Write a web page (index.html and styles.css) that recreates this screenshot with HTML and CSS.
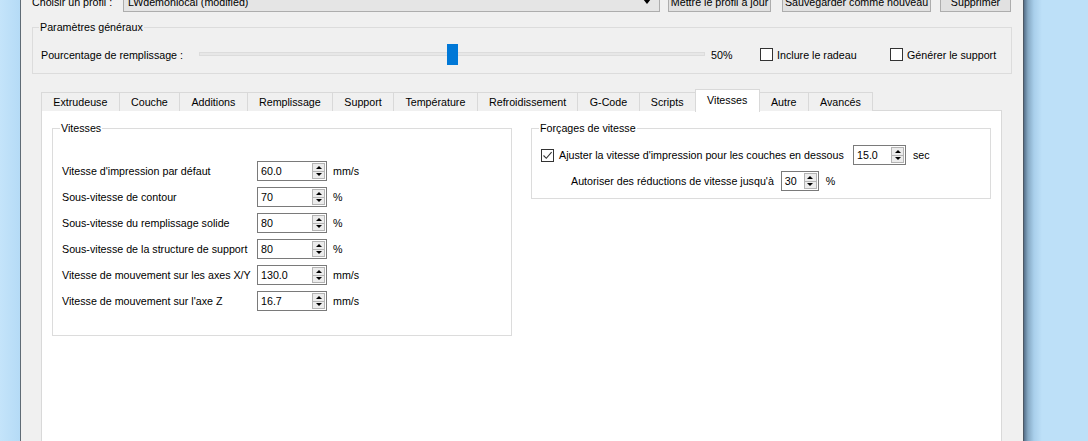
FILE: index.html
```html
<!DOCTYPE html>
<html lang="fr">
<head>
    <meta charset="UTF-8">
    <title>Paramètres d'impression</title>
    <link rel="stylesheet" href="styles.css">
</head>
<body>
<div class="desktop">
    <div class="strip-left"></div>

    <div class="window">
        <div class="profile-bar">
            <span class="profile-label">Choisir un profil :</span>
            <div class="combo">
                <span class="combo-text">LWdemonlocal (modified)</span>
                <span class="combo-arrow"></span>
            </div>
            <button class="btn btn-update">Mettre le profil à jour</button>
            <button class="btn btn-save">Sauvegarder comme nouveau</button>
            <button class="btn btn-delete">Supprimer</button>
        </div>

        <fieldset class="group general">
            <legend>Paramètres généraux</legend>
            <div class="general-row">
                <span class="fill-label">Pourcentage de remplissage :</span>
                <div class="slider">
                    <div class="groove"></div>
                    <div class="handle"></div>
                </div>
                <span class="fill-value">50%</span>
                <label class="check check-raft"><span class="box"></span>Inclure le radeau</label>
                <label class="check"><span class="box"></span>Générer le support</label>
            </div>
        </fieldset>

        <div class="tabs">
            <div class="tab-bar">
                <span class="tab">Extrudeuse</span>
                <span class="tab">Couche</span>
                <span class="tab">Additions</span>
                <span class="tab">Remplissage</span>
                <span class="tab">Support</span>
                <span class="tab">Température</span>
                <span class="tab">Refroidissement</span>
                <span class="tab">G-Code</span>
                <span class="tab">Scripts</span>
                <span class="tab active">Vitesses</span>
                <span class="tab">Autre</span>
                <span class="tab">Avancés</span>
            </div>

            <div class="tab-pane">
                <fieldset class="group speeds">
                    <legend>Vitesses</legend>
                    <div class="speed-grid">
                        <span>Vitesse d'impression par défaut</span>
                        <div class="spin"><span class="spin-value">60.0</span><span class="spin-btn"><span class="spin-up"></span><span class="spin-down"></span></span></div>
                        <span>mm/s</span>

                        <span>Sous-vitesse de contour</span>
                        <div class="spin"><span class="spin-value">70</span><span class="spin-btn"><span class="spin-up"></span><span class="spin-down"></span></span></div>
                        <span>%</span>

                        <span>Sous-vitesse du remplissage solide</span>
                        <div class="spin"><span class="spin-value">80</span><span class="spin-btn"><span class="spin-up"></span><span class="spin-down"></span></span></div>
                        <span>%</span>

                        <span>Sous-vitesse de la structure de support</span>
                        <div class="spin"><span class="spin-value">80</span><span class="spin-btn"><span class="spin-up"></span><span class="spin-down"></span></span></div>
                        <span>%</span>

                        <span>Vitesse de mouvement sur les axes X/Y</span>
                        <div class="spin"><span class="spin-value">130.0</span><span class="spin-btn"><span class="spin-up"></span><span class="spin-down"></span></span></div>
                        <span>mm/s</span>

                        <span>Vitesse de mouvement sur l'axe Z</span>
                        <div class="spin"><span class="spin-value">16.7</span><span class="spin-btn"><span class="spin-up"></span><span class="spin-down"></span></span></div>
                        <span>mm/s</span>
                    </div>
                </fieldset>

                <fieldset class="group overrides">
                    <legend>Forçages de vitesse</legend>
                    <div class="override-row">
                        <label class="check check-adjust">
                            <span class="box checked">
                                <svg width="11" height="11" viewBox="0 0 11 11"><path d="M1.5 5.5 L4.3 8.3 L9.6 2.2" fill="none" stroke="#333" stroke-width="1.1"/></svg>
                            </span>Ajuster la vitesse d'impression pour les couches en dessous
                        </label>
                        <div class="spin spin-sec"><span class="spin-value">15.0</span><span class="spin-btn"><span class="spin-up"></span><span class="spin-down"></span></span></div>
                        <span class="unit">sec</span>
                    </div>
                    <div class="override-row indent">
                        <span>Autoriser des réductions de vitesse jusqu'à</span>
                        <div class="spin spin-pct"><span class="spin-value">30</span><span class="spin-btn"><span class="spin-up"></span><span class="spin-down"></span></span></div>
                        <span class="unit">%</span>
                    </div>
                </fieldset>
            </div>
        </div>
    </div>

    <div class="strip-right"></div>
</div>
</body>
</html>
```

FILE: styles.css
```css
body {
    margin: 0;
    padding: 0;
    font-family: "Liberation Sans", Arial, sans-serif;
    font-size: 10.7px;
    color: #000;
    background: #bde0f8;
    overflow: hidden;
    height: 441px;
}
.desktop {
    display: flex;
    height: 441px;
}
.strip-left {
    width: 20px;
    background: linear-gradient(to right, #c4e4fa, #b5dbf6);
}
.strip-right {
    flex: 1;
    background: linear-gradient(to right, #56708a 0, #86a9c4 4px, #a9cfeb 10px, #bde0f8 18px);
}
.window {
    width: 1004px;
    height: 470px;
    border-left: 1px solid #5f6b75;
    border-right: 1px solid #4d5965;
    background: #f0f0f0;
    padding: 0 11px;
    box-sizing: border-box;
    display: flex;
    flex-direction: column;
}
.profile-bar {
    display: flex;
    align-items: center;
    height: 21px;
    margin-top: -9px;
    white-space: nowrap;
}
.profile-label {
    width: 91px;
}
.combo {
    width: 537px;
    height: 21px;
    box-sizing: border-box;
    border: 1px solid #adadad;
    background: #e5e5e5;
    display: flex;
    align-items: center;
    padding: 0 8px 0 4px;
}
.combo-text {
    flex: 1;
}
.combo-arrow {
    width: 0;
    height: 0;
    border-left: 4px solid transparent;
    border-right: 4px solid transparent;
    border-top: 5px solid #000;
}
.btn {
    height: 21px;
    box-sizing: border-box;
    border: 1px solid #adadad;
    background: #e1e1e1;
    font: inherit;
    color: #000;
    padding: 0;
    white-space: nowrap;
}
.btn-update {
    width: 103px;
    margin-left: 8px;
}
.btn-save {
    width: 149px;
    margin-left: 11px;
}
.btn-delete {
    width: 71px;
    margin-left: 9px;
}

/* group boxes */
.group {
    margin: 0;
    border: 1px solid #dcdcdc;
    min-width: 0;
}
.group legend {
    padding: 0 1px;
    margin-left: -2px;
    line-height: 13px;
}
.general {
    margin-top: 9px;
    padding: 10px 8px 7px;
}
.general-row {
    display: flex;
    align-items: center;
    height: 22px;
}
.fill-label {
    width: 158px;
}
.slider {
    width: 506px;
    height: 22px;
    position: relative;
    display: flex;
    align-items: center;
}
.groove {
    flex: 1;
    height: 2px;
    border: 1px solid #dcdcdc;
    background: #e7e7e7;
    margin-top: -2px;
}
.handle {
    position: absolute;
    left: 248px;
    top: 0;
    width: 11px;
    height: 21px;
    background: #0078d7;
}
.fill-value {
    width: 49px;
    margin-left: 6px;
}
.check {
    display: flex;
    align-items: center;
}
.check-raft {
    width: 130px;
}
.box {
    width: 13px;
    height: 13px;
    box-sizing: border-box;
    border: 1px solid #333;
    background: #fff;
    margin-right: 4px;
    margin-top: -2px;
    display: flex;
    align-items: center;
    justify-content: center;
}

/* tabs */
.tabs {
    margin: 15px 10px 0 9px;
    flex: 1;
    display: flex;
    flex-direction: column;
}
.tab-bar {
    display: flex;
    align-items: flex-end;
    height: 22px;
    padding-left: 1px;
    margin-bottom: -1px;
    position: relative;
    z-index: 1;
}
.tab {
    height: 19px;
    box-sizing: border-box;
    line-height: 18px;
    padding: 0 11.3px;
    border: 1px solid #d9d9d9;
    border-bottom: none;
    margin-left: -1px;
    background: #f0f0f0;
    text-align: center;
}
.tab.active {
    height: 23px;
    line-height: 20px;
    background: #fff;
    position: relative;
    z-index: 2;
    margin-bottom: -1px;
}
.tab-pane {
    flex: 1;
    border: 1px solid #d9d9d9;
    background: #fff;
    padding: 11px 10px 0;
    display: flex;
    align-items: flex-start;
    gap: 19px;
}
.speeds {
    width: 460px;
    box-sizing: border-box;
    padding: 26px 9px 24px;
}
.speed-grid {
    display: grid;
    grid-template-columns: 195px 76px auto;
    grid-auto-rows: 20px;
    row-gap: 6px;
    align-items: center;
}
.speed-grid .spin {
    margin-right: 6px;
}
.spin {
    height: 20px;
    box-sizing: border-box;
    border: 1px solid #7a7a7a;
    background: #fff;
    display: flex;
    align-items: center;
    justify-content: space-between;
}
.spin-value {
    padding-left: 3px;
}
.spin-btn {
    width: 13px;
    height: 16px;
    box-sizing: border-box;
    border: 1px solid #b4b4b4;
    background: #ececec;
    margin-right: 1px;
    display: flex;
    flex-direction: column;
}
.spin-btn span {
    flex: 1;
    display: flex;
    align-items: center;
    justify-content: center;
}
.spin-btn .spin-down {
    border-top: 1px solid #b4b4b4;
}
.spin-up::after,
.spin-down::after {
    content: "";
    width: 0;
    height: 0;
    border-left: 3px solid transparent;
    border-right: 3px solid transparent;
}
.spin-up::after {
    border-bottom: 3px solid #000;
}
.spin-down::after {
    border-top: 3px solid #000;
}
.overrides {
    width: 460px;
    box-sizing: border-box;
    padding: 10px 9px 7px;
}
.override-row {
    display: flex;
    align-items: center;
    height: 20px;
}
.override-row + .override-row {
    margin-top: 6px;
}
.override-row.indent {
    padding-left: 30px;
}
.check-adjust {
    width: 312px;
    white-space: nowrap;
}
.check-adjust .box {
    margin-right: 5px;
    margin-top: 0;
}
.spin-sec {
    width: 53px;
}
.spin-pct {
    width: 38px;
    margin-left: 7px;
}
.unit {
    margin-left: 7px;
}
```
